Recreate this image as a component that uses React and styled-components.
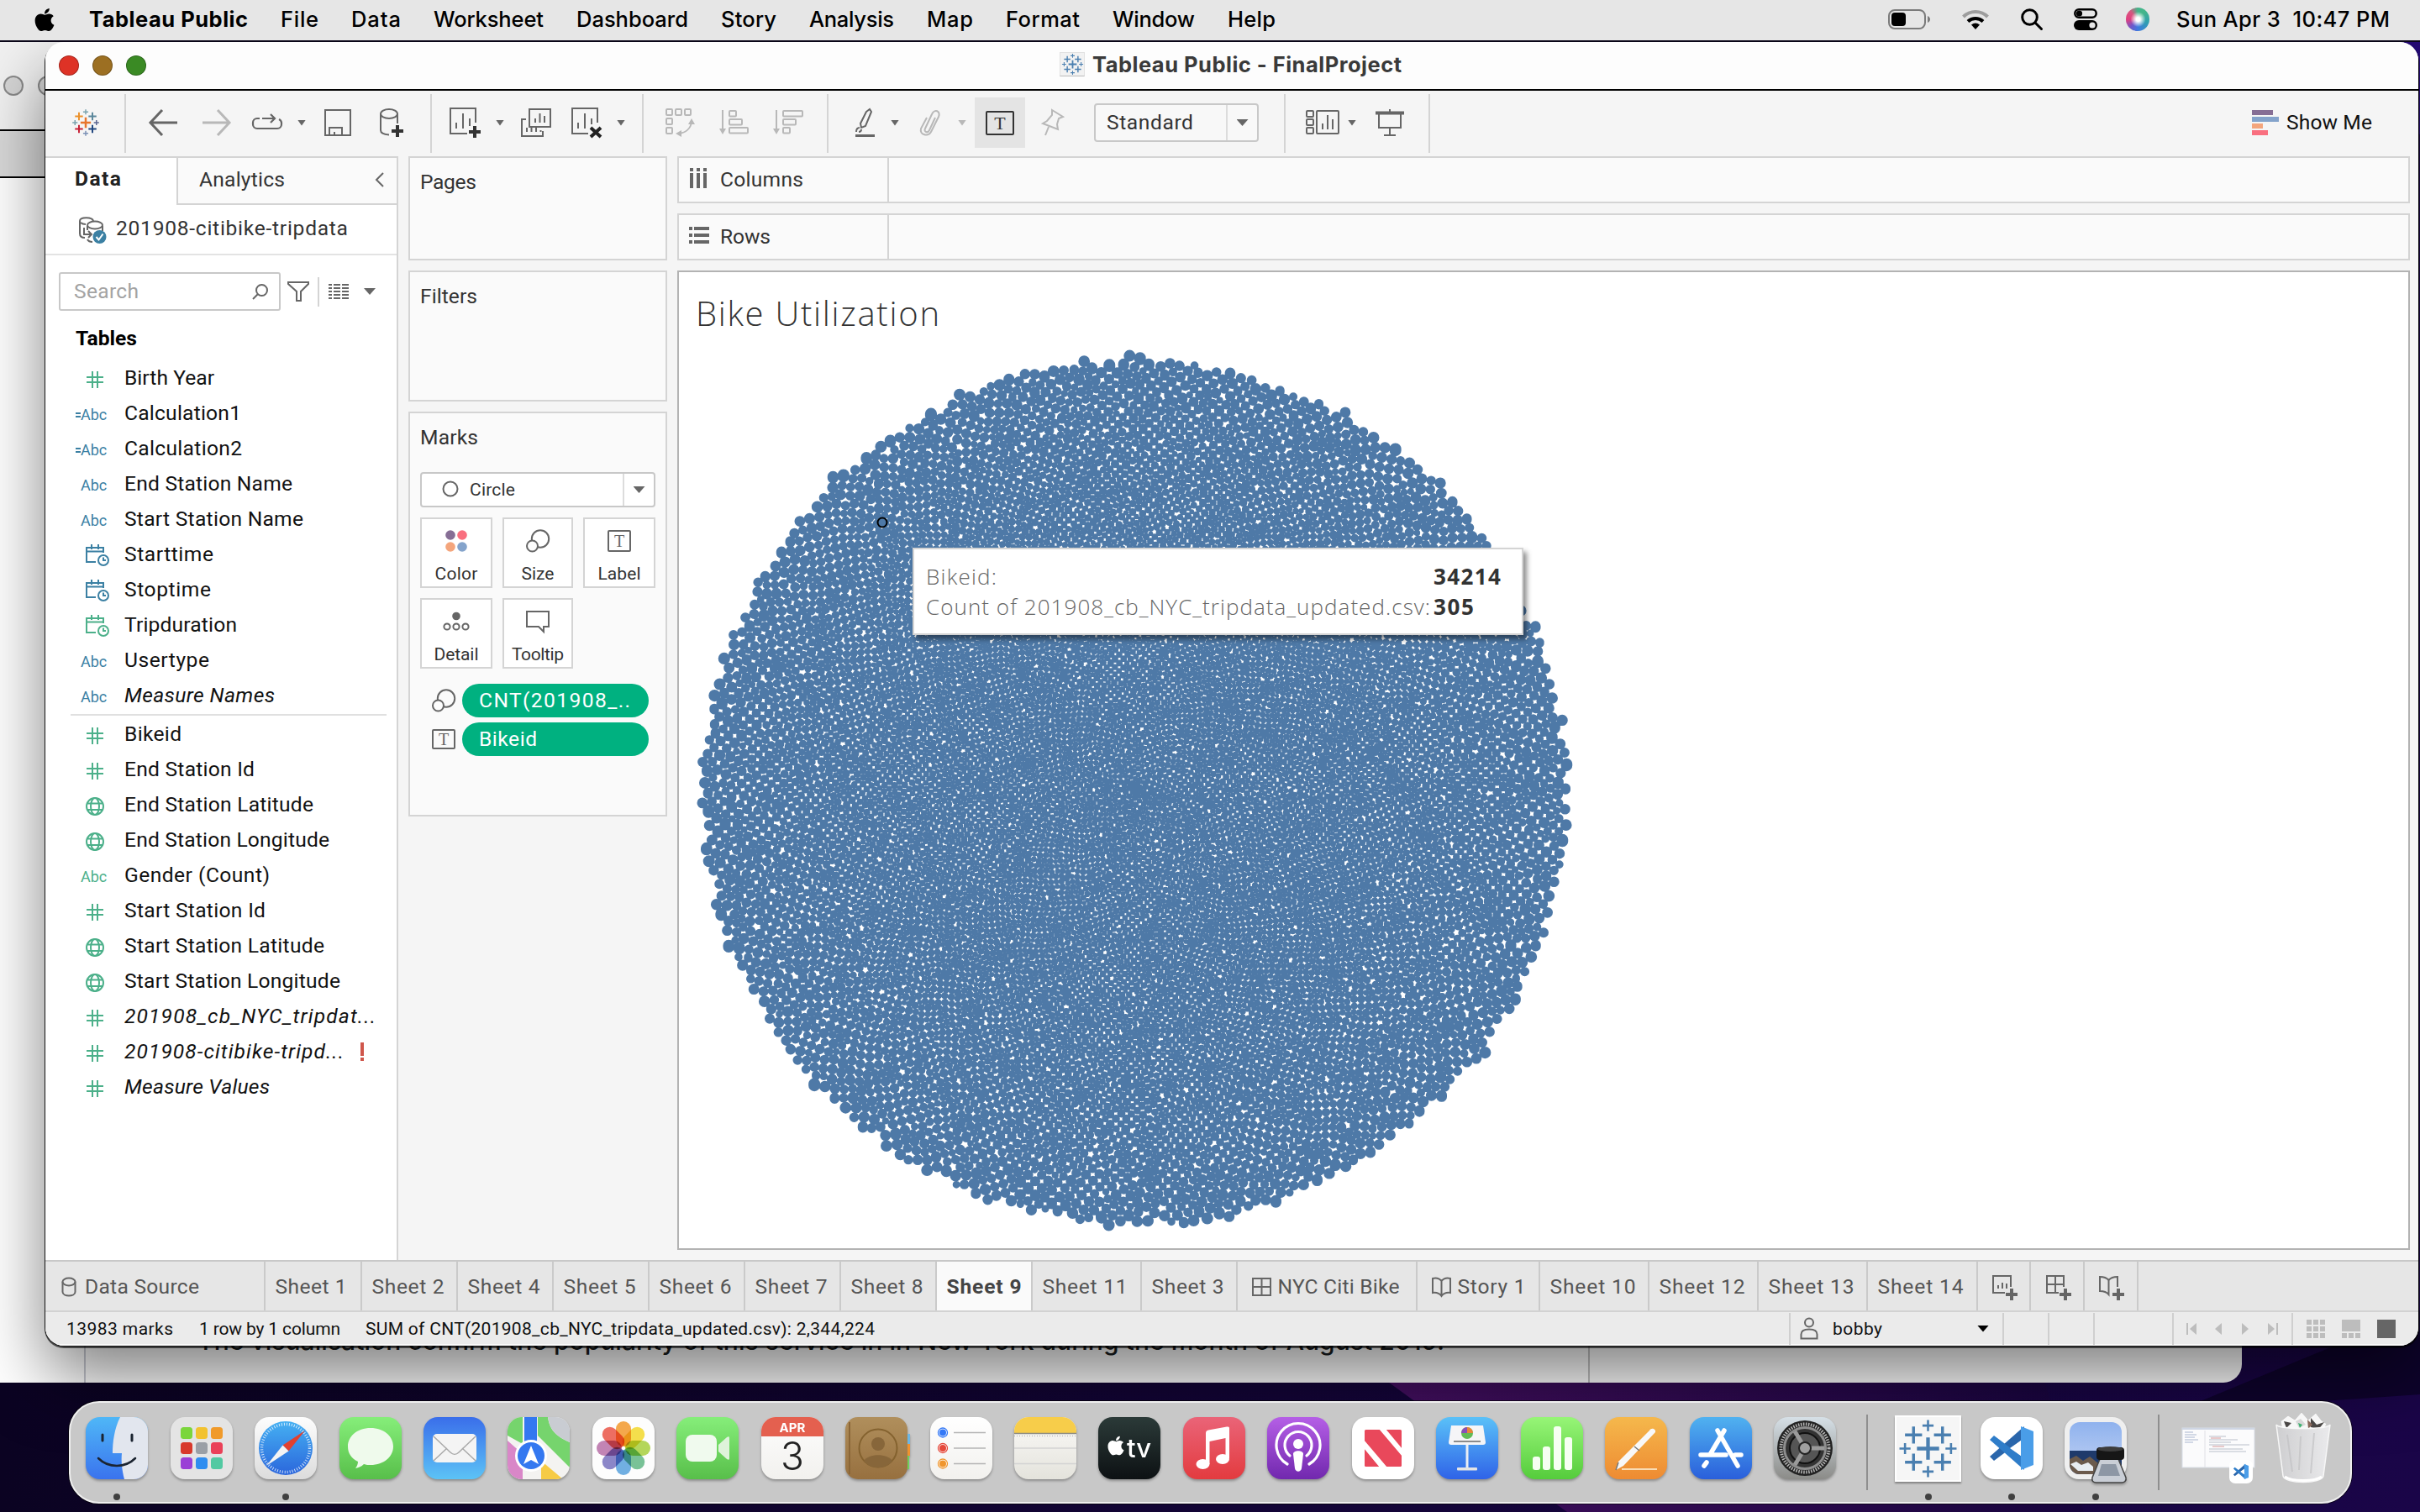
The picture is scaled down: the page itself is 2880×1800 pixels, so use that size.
import React, { useLayoutEffect, useMemo, useRef, useState } from "react";
import styled, { createGlobalStyle, css } from "styled-components";
import { FaApple } from "react-icons/fa";

const UI = `Roboto, "Open Sans", "Liberation Sans", sans-serif`;
const BOOK = `"Open Sans", "Noto Sans", sans-serif`;
const SYS = `Inter, "Liberation Sans", sans-serif`;

const GlobalStyle = createGlobalStyle`
  * { box-sizing: border-box; }
  html, body { margin: 0; padding: 0; background: #0c0326; overflow: hidden; }
  svg { display: block; flex: none; overflow: visible; }
`;

/* ---------- text ---------- */

const TextSpan = styled.span`
  display: inline-block;
  flex: none;
  white-space: pre;
  font-family: ${(p) => (p.$sys ? SYS : p.$book ? BOOK : UI)};
  font-size: ${(p) => p.$size || 24.6}px;
  font-weight: ${(p) => p.$weight || 400};
  font-style: ${(p) => (p.$italic ? "italic" : "normal")};
  line-height: ${(p) => p.$line || 32}px;
  color: ${(p) => p.$color || "#333"};
  margin-left: ${(p) => p.$ml || 0}px;
`;

/* A label set to a fixed measure: tracking is adjusted so it fills `w`. */
function Text({ w, children, ...rest }) {
  const ref = useRef(null);
  const [track, setTrack] = useState(0);
  useLayoutEffect(() => {
    if (!w) return;
    const el = ref.current;
    const range = document.createRange();
    range.selectNodeContents(el);
    el.style.letterSpacing = "0px";
    const natural = range.getBoundingClientRect().width;
    const t = (w - natural) / Math.max(1, String(children).length - 1);
    el.style.letterSpacing = `${t}px`;
    setTrack(t);
  }, [w, children]);
  return (
    <TextSpan ref={ref} style={w ? { width: w, letterSpacing: track } : undefined} {...rest}>
      {children}
    </TextSpan>
  );
}

/* ---------- desktop ---------- */

const Desktop = styled.div`
  position: relative;
  width: 2880px;
  height: 1800px;
  overflow: hidden;
  background: #0d0428;
`;

const Wallpaper = styled.svg`
  position: absolute;
  inset: 0;
`;

const MenuBar = styled.header`
  position: relative;
  z-index: 5;
  display: flex;
  align-items: center;
  height: 50px;
  padding: 0 36px 2px 40px;
  background: #e6e6e6;
  border-bottom: 2px solid #0a0618;
`;

const MenuItems = styled.nav`
  display: flex;
  gap: 39px;
  margin-left: 40px;
  flex: 1;
`;

const MenuStatus = styled.div`
  display: flex;
  align-items: center;
`;

const BackWindow = styled.section`
  position: absolute;
  left: 0;
  top: 50px;
  width: 2668px;
  height: 1596px;
  overflow: hidden;
  display: flex;
  flex-direction: column;
  background: #fff;
  border-bottom-right-radius: 22px;
`;

const BackTitle = styled.div`
  display: flex;
  align-items: center;
  gap: 17px;
  height: 104px;
  padding-left: 4px;
  background: #f1f1f1;
`;

const GreyLight = styled.i`
  width: 24px;
  height: 24px;
  border-radius: 50%;
  background: #d6d6d6;
  border: 2px solid #8a8a8a;
`;

const BackBand = styled.div`
  height: 58px;
  background: #d9d9d9;
  border-top: 2px solid #000;
  border-bottom: 2px solid #000;
`;

const BackPage = styled.div`
  flex: 1;
  display: flex;
  align-items: flex-end;
`;

const BackGutter = styled.div`
  width: 102px;
  height: 100%;
  border-right: 2px solid #c9cbd3;
`;

const BackArticle = styled.div`
  width: 1790px;
  height: 70px;
  padding-left: 133px;
  border-right: 2px solid #c4c4c4;
`;

const MainWindow = styled.main`
  position: absolute;
  left: 54px;
  top: 50px;
  width: 2824px;
  height: 1552px;
  display: flex;
  flex-direction: column;
  overflow: hidden;
  border-radius: 22px;
  background: #f5f5f5;
`;

const WindowShadow = styled.div`
  position: absolute;
  left: 54px;
  top: 52px;
  width: 2824px;
  height: 1550px;
  border-radius: 22px;
  box-shadow: 0 0 0 1px rgba(0, 0, 0, 0.75), 0 2px 0 1px rgba(0, 0, 0, 0.6), 0 36px 80px rgba(0, 0, 0, 0.5);
`;

const TitleBar = styled.div`
  position: relative;
  display: flex;
  align-items: center;
  height: 58px;
  padding-left: 16px;
  background: #fdfdfd;
  border-bottom: 2px solid #000;
`;

const Light = styled.i`
  width: 24px;
  height: 24px;
  margin-right: 16px;
  border-radius: 50%;
  background: ${(p) => p.$c};
  border: 1px solid rgba(0, 0, 0, 0.25);
`;

const WindowTitle = styled.div`
  display: flex;
  align-items: center;
  gap: 9px;
  margin-left: 1071px;
  padding-bottom: 2px;
`;

const DocIcon = styled.span`
  display: flex;
  padding: 0 1px;
  width: 30px;
  height: 29px;
  align-items: center;
  justify-content: center;
  background: #f2f2f2;
  border: 1px solid #e2e2e2;
  border-bottom-color: #bbb;
  margin-top: -2px;
`;

/* ---------- toolbar ---------- */

const Toolbar = styled.div`
  display: flex;
  align-items: center;
  height: 78px;
  flex: none;
  padding: 0 53px 2px 0;
`;

const Slot = styled.span`
  display: flex;
  align-items: center;
  justify-content: center;
  flex: none;
  width: ${(p) => p.$w}px;
  height: ${(p) => p.$h || 34}px;
  margin-left: ${(p) => p.$ml}px;
  background: ${(p) => p.$bg || "transparent"};
`;

const Sep = styled.i`
  flex: none;
  width: 2px;
  height: 70px;
  margin-left: ${(p) => p.$ml}px;
  margin-top: 2px;
  background: #d4d4d4;
`;

const Caret = styled.i`
  flex: none;
  width: ${(p) => p.$w || 10}px;
  height: ${(p) => p.$h || 7}px;
  margin-left: ${(p) => p.$ml || 0}px;
  background: ${(p) => p.$c || "#666"};
  clip-path: polygon(0 0, 100% 0, 50% 100%);
`;

const Select = styled.div`
  display: flex;
  flex: none;
  width: ${(p) => p.$w}px;
  height: ${(p) => p.$h}px;
  margin-left: ${(p) => p.$ml || 0}px;
  margin-top: ${(p) => p.$mt || 0}px;
  border: 2px solid #c8c8c8;
  border-radius: 4px;
  background: ${(p) => p.$bg || "#f8f8f8"};
`;

const SelectValue = styled.div`
  display: flex;
  align-items: center;
  flex: 1;
  padding-left: ${(p) => p.$pl}px;
`;

const SelectArrow = styled.div`
  display: flex;
  align-items: center;
  justify-content: center;
  width: 37px;
  border-left: 2px solid #dcdcdc;
`;

/* ---------- body ---------- */

const Body = styled.div`
  display: flex;
  gap: 12px;
  height: 1314px;
  padding-right: 10px;
  flex: none;
`;

const DataPane = styled.aside`
  display: flex;
  flex-direction: column;
  width: 420px;
  background: #fff;
  border-top: 2px solid #d4d4d4;
  border-right: 2px solid #d4d4d4;
`;

const PaneTabs = styled.div`
  display: flex;
  height: 56px;
`;

const PaneTab = styled.div`
  display: flex;
  align-items: center;
  ${(p) =>
    p.$active
      ? css`
          width: 156px;
          padding-left: 35px;
          padding-bottom: 6px;
        `
      : css`
          flex: 1;
          padding: 0 15px 3px 25px;
          justify-content: space-between;
          background: #fafafa;
          border-left: 2px solid #d4d4d4;
          border-bottom: 2px solid #d4d4d4;
        `}
`;

const SourceRow = styled.div`
  display: flex;
  align-items: center;
  gap: 11px;
  height: 60px;
  padding: 0 0 3px 40px;
  border-bottom: 2px solid #e3e3e3;
`;

const SearchRow = styled.div`
  display: flex;
  align-items: center;
  padding: 20px 0 0 16px;
`;

const SearchBox = styled.div`
  display: flex;
  align-items: center;
  justify-content: space-between;
  width: 264px;
  height: 46px;
  padding: 0 13px 0 16px;
  border: 2px solid #c8c8c8;
  border-radius: 3px;
`;

const TablesHead = styled.div`
  height: 42px;
  margin: 12px 0 5px;
  padding: 5px 0 0 36px;
`;

const FieldRow = styled.div`
  display: flex;
  align-items: center;
  height: 42px;
  padding-left: 34px;
`;

const FieldIcon = styled.span`
  display: flex;
  justify-content: flex-end;
  align-items: center;
  width: 40px;
  height: 34px;
  margin-right: 20px;
  padding-top: 3px;
`;

const Bang = styled.i`
  width: 4px;
  height: 22px;
  margin-left: 20px;
  background: linear-gradient(#cf564b 16px, transparent 16px 18px, #cf564b 18px);
`;

const Divider = styled.hr`
  width: 376px;
  height: 2px;
  margin: 1px 0 1px 30px;
  border: 0;
  background: #e0e0e0;
`;

const CardColumn = styled.div`
  display: flex;
  flex-direction: column;
  gap: 12px;
  width: 308px;
  flex: none;
`;

const Card = styled.section`
  height: ${(p) => p.$h}px;
  padding: 13px 12px;
  border: 2px solid #d4d4d4;
  background: #fafafa;
`;

const MarkGrid = styled.div`
  display: grid;
  grid-template-columns: 86px 84px 86px;
  grid-auto-rows: 84px;
  gap: 12px;
  margin: 12px 0 18px;
`;

const MarkButton = styled.div`
  display: flex;
  flex-direction: column;
  align-items: center;
  border: 2px solid #d4d4d4;
  background: #fff;
`;

const MarkIcon = styled.span`
  display: flex;
  align-items: center;
  justify-content: center;
  height: 52px;
`;

const PillRow = styled.div`
  display: flex;
  align-items: center;
  gap: 8px;
  height: 40px;
  margin: 0 0 6px 14px;
`;

const Pill = styled.div`
  display: flex;
  align-items: center;
  width: 222px;
  height: 40px;
  padding-left: 20px;
  padding-bottom: 1px;
  border-radius: 20px;
  background: #00b180;
`;

const ViewColumn = styled.div`
  display: flex;
  flex-direction: column;
  gap: 12px;
  flex: 1;
`;

const Shelf = styled.div`
  display: flex;
  height: 56px;
  border: 2px solid #d4d4d4;
  background: #fafafa;
`;

const ShelfHead = styled.div`
  display: flex;
  align-items: center;
  gap: ${(p) => p.$gap}px;
  width: 250px;
  padding-left: ${(p) => p.$pl}px;
  border-right: 2px solid #d4d4d4;

  svg {
    margin-bottom: 4px;
  }
`;

const Sheet = styled.section`
  position: relative;
  height: 1166px;
  border: 2px solid #b3b3b3;
  background: #fff;
`;

const SheetTitle = styled.h1`
  margin: 0;
  padding: 24px 0 0 20px;
  height: 96px;
`;

const Plot = styled.svg`
  width: 1080px;
  height: 1060px;
`;

const HoverCard = styled.div`
  position: absolute;
  left: 278px;
  top: 328px;
  width: 727px;
  height: 104px;
  display: grid;
  grid-template-columns: 604px auto;
  grid-auto-rows: 36px;
  align-content: start;
  padding: 14px 0 0 14px;
  border: 2px solid #d4d4d4;
  background: #fff;
  box-shadow: 4px 5px 6px rgba(0, 0, 0, 0.45);
`;

/* ---------- bottom bars ---------- */

const TabBar = styled.div`
  display: flex;
  height: 62px;
  flex: none;
  border-top: 2px solid #c8c8c8;
  border-bottom: 2px solid #d2d2d2;
  background: #e6e6e6;
`;

const SheetTab = styled.div`
  display: flex;
  align-items: center;
  gap: 7px;
  flex: none;
  width: ${(p) => p.$w}px;
  padding-left: ${(p) => p.$pl ?? 11.5}px;
  padding-top: 1px;
  background: ${(p) => (p.$active ? "#fafafa" : "transparent")};
  border-right: 2px solid #cacaca;
`;

const StatusBar = styled.div`
  display: flex;
  align-items: center;
  height: 40px;
  padding: 1px 0 0 25px;
  background: #ebebeb;
  border-bottom: 2px solid #fafafa;
`;

const StatusCell = styled.div`
  display: flex;
  align-items: center;
  flex: none;
  height: 38px;
  width: ${(p) => p.$w}px;
  padding-left: ${(p) => p.$pl || 0}px;
  margin-left: ${(p) => p.$ml || 0};
  border-left: 2px solid #cfcfcf;
`;

/* ---------- dock ---------- */

const Dock = styled.footer`
  position: absolute;
  left: 82px;
  top: 1668px;
  width: 2717px;
  height: 122px;
  display: flex;
  padding: 0 0 0 5px;
  border: 2px solid #efefef;
  border-radius: 36px;
  background: #c8c8c8;
  box-shadow: 0 0 0 1px rgba(0, 0, 0, 0.6);
`;

const DockSlot = styled.div`
  display: flex;
  flex-direction: column;
  align-items: center;
  flex: none;
  width: ${(p) => p.$w || 100.45}px;
  padding-top: ${(p) => p.$pt ?? 17}px;
`;

const DockIcon = styled.svg`
  width: 74px;
  height: 74px;
  filter: drop-shadow(0 2px 1.5px rgba(0, 0, 0, 0.3));
`;

const DockDot = styled.i`
  width: 8px;
  height: 8px;
  margin-top: 17px;
  border-radius: 50%;
  background: #404040;
`;

const DockSep = styled.i`
  width: 2px;
  height: 90px;
  background: #8f8f8f;
`;

/* ---------- small drawings ---------- */

const I = ({ w, h, c = "#666", sw = 2, children, dy = 0 }) => (
  <svg width={w} height={h} viewBox={`0 ${-dy} ${w} ${h}`} fill="none" stroke={c} strokeWidth={sw}>
    {children}
  </svg>
);

const plus = (x, y, s, w, c) => <path key={`${x},${y}`} d={`M${x - s} ${y}h${2 * s}M${x} ${y - s}v${2 * s}`} stroke={c} strokeWidth={w} />;

function TableauMark({ size, colors, k = 1 }) {
  const c = colors;
  return (
    <svg width={size} height={size} viewBox="-36 -36 72 72" fill="none">
      {plus(0, 0, 13, 5 * k, c[0])}
      {plus(-17, -16, 10, 4 * k, c[1])}
      {plus(17, -16, 10, 4 * k, c[2])}
      {plus(-17, 16, 10, 4 * k, c[3])}
      {plus(17, 16, 10, 4 * k, c[4])}
      {plus(0, -27, 6.5, 3 * k, c[5])}
      {plus(0, 27, 6.5, 3 * k, c[6])}
      {plus(-27, 0, 6.5, 3 * k, c[7])}
      {plus(27, 0, 6.5, 3 * k, c[8])}
    </svg>
  );
}
const LOGO = ["#e8762c", "#eb912c", "#5b879b", "#c72035", "#1f457e", "#7aa3ae", "#7b90b5", "#7aa3ae", "#5b6591"];
const BLUE = Array(9).fill("#4a7fb0");

function NewSheet() {
  return (
    <I w={38} h={36}>
      <path d="M31 18V1H1v30h20M8 25v-7M16 25V7M24 22V13" />
      <path d="M23 29h14M30 22v14" stroke="#333" strokeWidth="4" />
    </I>
  );
}
function ClearSheet() {
  return (
    <I w={36} h={36}>
      <path d="M31 18V1H1v30h19M8 25v-7M16 25V7M24 20V13" />
      <path d="M23 24l12 11M35 24L23 35" stroke="#222" strokeWidth="4" />
    </I>
  );
}
function TagT({ w = 28, h = 24, c = "#666", fs = 20 }) {
  return (
    <I w={w} h={h} c={c}>
      <rect x="1" y="1" width={w - 2} height={h - 2} rx="1" />
      <text x={w / 2} y={h / 2 + fs * 0.34} textAnchor="middle" fontFamily="Liberation Serif, serif" fontSize={fs} fill={c} stroke="none">
        T
      </text>
    </I>
  );
}
function SizeGlyph() {
  return (
    <I w={28} h={28}>
      <circle cx="17" cy="11.5" r="10.2" />
      <circle cx="7.5" cy="20" r="6.5" fill="#fdfdfd" />
    </I>
  );
}
const sortBars = (lens) => (
  <>
    <path d="M4 2v24" />
    <path d="M0 24h8l-4 7z" fill="#b8b8b8" stroke="none" />
    {lens.map((l, i) => (
      <rect key={i} x="12" y={3 + i * 10} width={l} height="6.5" rx="1" />
    ))}
  </>
);

function HashIcon() {
  return (
    <I w={26} h={24} c="#4cb08a">
      <path d="M1 9h20M1 15h20M8 2v20M14 2v20" />
    </I>
  );
}
function GlobeIcon() {
  return (
    <I w={26} h={24} c="#4cb08a">
      <circle cx="11" cy="12" r="10" />
      <ellipse cx="11" cy="12" rx="5" ry="10" />
      <path d="M1 8.500h20M1 16h20" />
    </I>
  );
}
function CalendarIcon({ c }) {
  return (
    <svg width={26} height={27} viewBox="0 0 26 27" fill="none" stroke={c} strokeWidth="2">
      <path d="M21 10V4H1v17h11M1 8.500h20M7 0v6M15 0v6" />
      <circle cx="21" cy="19" r="6" />
      <path d="M21 15.500v3.500h3" />
    </svg>
  );
}
const TypeText = styled.span`
  font-family: ${UI};
  font-size: 18px;
  line-height: 20px;
  letter-spacing: -0.1px;
  color: ${(p) => p.$c};
  margin-right: 1px;
  white-space: pre;
`;

const TYPE_ICONS = {
  num: <HashIcon />,
  geo: <GlobeIcon />,
  abc: <TypeText $c="#3b80a3">Abc</TypeText>,
  gabc: <TypeText $c="#4cb08a">Abc</TypeText>,
  calc: (
    <>
      <I w={6} h={20} c="#3b80a3">
        <path d="M0 8h6M0 12h6" />
      </I>
      <TypeText $c="#3b80a3">Abc</TypeText>
    </>
  ),
  time: <CalendarIcon c="#3b80a3" />,
  gtime: <CalendarIcon c="#4cb08a" />,
};

const DIMENSIONS = [
  ["num", "Birth Year", 104],
  ["calc", "Calculation1", 136],
  ["calc", "Calculation2", 137],
  ["abc", "End Station Name", 197],
  ["abc", "Start Station Name", 210],
  ["time", "Starttime", 103],
  ["time", "Stoptime", 100],
  ["gtime", "Tripduration", 131],
  ["abc", "Usertype", 98],
  ["abc", "Measure Names", 176, true],
];
const MEASURES = [
  ["num", "Bikeid", 65],
  ["num", "End Station Id", 152],
  ["geo", "End Station Latitude", 222],
  ["geo", "End Station Longitude", 241],
  ["gabc", "Gender (Count)", 170],
  ["num", "Start Station Id", 165],
  ["geo", "Start Station Latitude", 235],
  ["geo", "Start Station Longitude", 254],
  ["num", "201908_cb_NYC_tripdat...", 296, true],
  ["num", "201908-citibike-tripd...", 258, true, true],
  ["num", "Measure Values", 170, true],
];

function Field({ data: [type, name, w, italic, bang] }) {
  return (
    <FieldRow>
      <FieldIcon>{TYPE_ICONS[type]}</FieldIcon>
      <Text w={w + 3} $italic={italic} $color="#111">
        {name}
      </Text>
      {bang && <Bang />}
    </FieldRow>
  );
}

/* ---------- packed bubbles ---------- */

function place(b, a, c) {
  const dx = b.x - a.x;
  const dy = b.y - a.y;
  const d2 = dx * dx + dy * dy;
  const a2 = (a.r + c.r) ** 2;
  const b2 = (b.r + c.r) ** 2;
  if (a2 > b2) {
    const x = (d2 + b2 - a2) / (2 * d2);
    const y = Math.sqrt(Math.max(0, b2 / d2 - x * x));
    c.x = b.x - x * dx - y * dy;
    c.y = b.y - x * dy + y * dx;
  } else {
    const x = (d2 + a2 - b2) / (2 * d2);
    const y = Math.sqrt(Math.max(0, a2 / d2 - x * x));
    c.x = a.x + x * dx - y * dy;
    c.y = a.y + x * dy + y * dx;
  }
}
function hits(a, b) {
  const dr = a.r + b.r - 1e-6;
  const dx = b.x - a.x;
  const dy = b.y - a.y;
  return dr > 0 && dr * dr > dx * dx + dy * dy;
}
function score(a) {
  const b = a.next;
  const ab = a.r + b.r;
  const dx = (a.x * b.r + b.x * a.r) / ab;
  const dy = (a.y * b.r + b.y * a.r) / ab;
  return dx * dx + dy * dy;
}

function packBubbles(count, radius) {
  let seed = 20190801;
  const rnd = () => {
    seed = (seed * 1664525 + 1013904223) % 4294967296;
    return seed / 4294967296;
  };
  const nodes = [];
  for (let i = 0; i < count; i++) {
    const t = i / count;
    const base = 3.15 + 2.5 * Math.pow(t, 3);
    const v = rnd();
    const small = rnd() < 0.14 ? 0.78 : 1;
    nodes.push({ x: 0, y: 0, r: base * (0.86 + 0.24 * v) * small });
  }
  let [a, b, c] = nodes;
  a.x = -b.r;
  b.x = a.r;
  place(b, a, c);
  a.next = c.prev = b;
  b.next = a.prev = c;
  c.next = b.prev = a;
  pack: for (let i = 3; i < count; i++) {
    c = nodes[i];
    place(a, b, c);
    let j = b.next;
    let k = a.prev;
    let sj = b.r;
    let sk = a.r;
    do {
      if (sj <= sk) {
        if (hits(j, c)) {
          b = j;
          a.next = b;
          b.prev = a;
          --i;
          continue pack;
        }
        sj += j.r;
        j = j.next;
      } else {
        if (hits(k, c)) {
          a = k;
          a.next = b;
          b.prev = a;
          --i;
          continue pack;
        }
        sk += k.r;
        k = k.prev;
      }
    } while (j !== k.next);
    c.prev = a;
    c.next = b;
    a.next = b.prev = b = c;
    let aa = score(a);
    while ((c = c.next) !== b) {
      const ca = score(c);
      if (ca < aa) {
        a = c;
        aa = ca;
      }
    }
    b = a.next;
  }
  let max = 0;
  for (const n of nodes) max = Math.max(max, Math.hypot(n.x, n.y) + n.r);
  const s = radius / max;
  return nodes.map((n) => ({ x: n.x * s, y: n.y * s, r: n.r * s * 1.07 }));
}

function Bubbles() {
  const d = useMemo(() => {
    const f = (v) => v.toFixed(1);
    return packBubbles(13983, 526)
      .map(({ x, y, r }) => `M${f(543 + x - r)} ${f(523 + y)}a${f(r)} ${f(r)} 0 1 0 ${f(2 * r)} 0a${f(r)} ${f(r)} 0 1 0 ${f(-2 * r)} 0`)
      .join("");
  }, []);
  return (
    <Plot viewBox="0 0 1080 1060">
      <path d={d} fill="#4e79a7" />
      <circle cx="242" cy="202" r="5.500" fill="#4e79a7" stroke="#000" strokeWidth="2" />
    </Plot>
  );
}

/* ---------- toolbar content ---------- */

function Tools() {
  const dim = "#b8b8b8";
  return (
    <Toolbar>
      <Slot $w={34} $ml={31}>
        <TableauMark size={34} colors={LOGO} k={1.05} />
      </Slot>
      <Sep $ml={29} />
      <Slot $w={34} $ml={27}>
        <I w={34} h={32} sw={3}>
          <path d="M1 16h33M16 1L2 16l14 15" />
        </I>
      </Slot>
      <Slot $w={34} $ml={30}>
        <I w={34} h={32} sw={3} c={dim}>
          <path d="M0 16h32M18 1l14 15-14 15" />
        </I>
      </Slot>
      <Slot $w={36} $ml={25}>
        <I w={36} h={22} sw={2.2}>
          <path d="M9 6H6a5 5 0 0 0-5 5v2a5 5 0 0 0 5 5h24a5 5 0 0 0 5-5v-2a5 5 0 0 0-3-4M12 6h14M22 1l5 5-5 5" />
        </I>
      </Slot>
      <Caret $ml={18} />
      <Slot $w={32} $ml={22}>
        <I w={32} h={32}>
          <path d="M1 1h30v30H1zM6 31v-9h15v9M12 31v-4" />
        </I>
      </Slot>
      <Slot $w={28} $ml={34}>
        <I w={28} h={34}>
          <ellipse cx="11" cy="6.500" rx="10" ry="5.500" />
          <path d="M1 7v19c0 3 4 5 10 5.500M21 7v11" />
          <path d="M14 27h14M21 20v14" stroke="#333" strokeWidth="4" />
        </I>
      </Slot>
      <Sep $ml={32} />
      <Slot $w={38} $ml={21}>
        <NewSheet />
      </Slot>
      <Caret $ml={17} />
      <Slot $w={36} $ml={20}>
        <I w={36} h={34}>
          <path d="M10 1h25v21H10zM17 17v-5M22.500 17V6M28 17V9M6 13H1v20h25v-6M7 28v-5M12.500 28v-5M18 28v-5M23.500 28v-2" />
        </I>
      </Slot>
      <Slot $w={36} $ml={24}>
        <ClearSheet />
      </Slot>
      <Caret $ml={18} />
      <Sep $ml={20} />
      <Slot $w={36} $ml={26}>
        <I w={36} h={34} c={dim}>
          <rect x="1" y="1" width="7" height="7" rx="1" />
          <rect x="12" y="1" width="7" height="7" rx="1" />
          <rect x="23" y="1" width="7" height="7" rx="1" />
          <rect x="1" y="12" width="7" height="7" rx="1" />
          <rect x="1" y="23" width="7" height="7" rx="1" />
          <path d="M16 30c8-1 14-6 15-14" />
          <path d="M12 30l7-4v8zM31 12l-4 7h8z" fill={dim} stroke="none" />
        </I>
      </Slot>
      <Slot $w={36} $ml={28}>
        <I w={36} h={34} c={dim}>
          {sortBars([8, 15, 22])}
        </I>
      </Slot>
      <Slot $w={36} $ml={28}>
        <I w={36} h={34} c={dim}>
          {sortBars([23, 15, 8])}
        </I>
      </Slot>
      <Sep $ml={28} />
      <Slot $w={24} $ml={32}>
        <I w={24} h={34}>
          <path d="M13 4l4-3 2 3-7 17-5 2-1-5zM1 28c0-3 1-5 4-5M4 28c2 0 3-1 3-3" />
          <path d="M0 32.500h23" strokeWidth="3" />
        </I>
      </Slot>
      <Caret $ml={18} />
      <Slot $w={26} $ml={24}>
        <I w={26} h={32} c={dim}>
          <path d="M19 10l-7 15c-2 4-7 2-5-2l8-17c3-7 11-4 8 3l-9 18c-3 6-14 4-12-4L9 10" />
        </I>
      </Slot>
      <Caret $ml={20} $c={dim} />
      <Slot $w={60} $h={60} $ml={10} $bg="#e4e4e4">
        <TagT w={34} h={29} c="#333" fs={22} />
      </Slot>
      <Slot $w={26} $ml={20}>
        <I w={26} h={32} c={dim}>
          <path d="M12 1l13 8-5 2-2 7 1 6L1 17l5-3 6-7zM8 21L4 31" />
        </I>
      </Slot>
      <Select $w={196} $h={46} $ml={36}>
        <SelectValue $pl={13}>
          <Text w={103}>Standard</Text>
        </SelectValue>
        <SelectArrow>
          <Caret $w={14} $h={8} />
        </SelectArrow>
      </Select>
      <Sep $ml={30} />
      <Slot $w={40} $ml={24}>
        <I w={40} h={30}>
          <rect x="1" y="1" width="8" height="7" rx="1" />
          <rect x="1" y="11" width="8" height="7" rx="1" />
          <rect x="1" y="21" width="8" height="7" rx="1" />
          <rect x="13" y="1" width="26" height="27" rx="1" />
          <path d="M20 23v-7M26 23V6M32 23V11" />
        </I>
      </Slot>
      <Caret $ml={10} />
      <Slot $w={34} $ml={23}>
        <I w={34} h={32}>
          <path d="M4 4v18h26V4M17 22v9M10 31h14M17 0v4" />
          <path d="M0 4.500h34" strokeWidth="4" />
        </I>
      </Slot>
      <Sep $ml={29} />
      <Slot $w={32} $ml={978}>
        <svg width="32" height="30">
          <path d="M0 0h25v6H0z" fill="#866e95" />
          <path d="M0 8h32v6H0z" fill="#84a3cb" />
          <path d="M0 16h13v6H0z" fill="#f4a57c" />
          <path d="M0 24h19v6H0z" fill="#f96f7f" />
        </svg>
      </Slot>
      <Text w={102} $ml={9} $color="#111">
        Show Me
      </Text>
    </Toolbar>
  );
}

/* ---------- bottom tabs ---------- */

const BookGlyph = () => (
  <I w={23} h={24} c="#666">
    <path d="M1 2c4-1 8 0 10.500 3C14 2 18 1 22 2v17c-4-.500-8 .500-10.500 4C9 19.500 5 18.500 1 19zM11.500 5v17" />
  </I>
);
const GridGlyph = () => (
  <I w={23} h={22}>
    <path d="M1 1h21v20H1zM11.500 1v20M1 11h21" />
  </I>
);

const TABS = [
  [115, "Sheet 1", 83],
  [114, "Sheet 2", 84],
  [114, "Sheet 4", 84],
  [114, "Sheet 5", 84],
  [114, "Sheet 6", 84],
  [114, "Sheet 7", 84],
  [114, "Sheet 8", 84],
  [114, "Sheet 9", 87, "active"],
  [130, "Sheet 11", 99],
  [114, "Sheet 3", 84],
  [214, "NYC Citi Bike", 143, "grid"],
  [146, "Story 1", 79, "book"],
  [130, "Sheet 10", 100],
  [130, "Sheet 12", 100],
  [130, "Sheet 13", 100],
  [131, "Sheet 14", 100],
];

function BottomTabs() {
  return (
    <TabBar>
      <SheetTab $w={262} $pl={19}>
        <I w={18} h={24}>
          <ellipse cx="9" cy="6" rx="7.500" ry="4.500" />
          <path d="M1.500 6v12c0 6 15 6 15 0V6" />
        </I>
        <Text w={136} $color="#555" $ml={3}>
          Data Source
        </Text>
      </SheetTab>
      {TABS.map(([w, name, tw, kind]) => (
        <SheetTab key={name} $w={w} $active={kind === "active"} $pl={kind === "grid" || kind === "book" ? 16.5 : undefined}>
          {kind === "grid" && <GridGlyph />}
          {kind === "book" && <BookGlyph />}
          <Text w={tw + 2} $ml={kind === "grid" || kind === "book" ? 1 : 0} $color={kind === "active" ? "#444" : "#555"} $weight={kind === "active" ? 700 : 400}>
            {name}
          </Text>
        </SheetTab>
      ))}
      <SheetTab $w={63} $pl={17}>
        <I w={30} h={28}>
          <path d="M22 14V1H1v20h14M7 16v-4M12 16V9M17 16v-6" />
          <path d="M16 23h14M23 16v14" strokeWidth="4" />
        </I>
      </SheetTab>
      <SheetTab $w={64} $pl={18}>
        <I w={30} h={28}>
          <path d="M21 14V1H1v20h14M11 1v20M1 11h20" />
          <path d="M16 23h14M23 16v14" strokeWidth="4" />
        </I>
      </SheetTab>
      <SheetTab $w={64} $pl={17}>
        <I w={30} h={28}>
          <path d="M22 14V2c-5 0-8 1-10.500 4C9 3 6 2 1 2v17c5 0 8 1 10.500 4V6" />
          <path d="M16 23h14M23 16v14" strokeWidth="4" />
        </I>
      </SheetTab>
    </TabBar>
  );
}

function Status() {
  const g = "#bdbdbd";
  return (
    <StatusBar>
      <Text w={127} $size={21} $color="#111">13983 marks</Text>
      <Text w={168} $size={21} $color="#111" $ml={31}>1 row by 1 column</Text>
      <Text w={606} $size={21} $color="#111" $ml={30}>SUM of CNT(201908_cb_NYC_tripdata_updated.csv): 2,344,224</Text>
      <StatusCell $w={254} $pl={11} $ml="auto">
        <I w={22} h={27}>
          <circle cx="11" cy="6.500" r="5" />
          <path d="M1.500 25.500v-5c0-4 3-6 9.500-6s9.500 2 9.500 6v5z" />
        </I>
        <Text w={59} $size={21} $color="#111" $ml={17}>bobby</Text>
        <Caret $c="#000" $w={14} $h={8} $ml={113} />
      </StatusCell>
      <StatusCell $w={54} />
      <StatusCell $w={54} />
      <StatusCell $w={94} />
      <StatusCell $w={142} $pl={15}>
        <svg width="110" height="14">
          <path d="M0 0h2v14H0zM12 0v14L4 7zM42 0v14l-8-7zM66 0v14l8-7zM97 0v14l8-7zM107 0h2v14h-2z" fill={g} />
        </svg>
      </StatusCell>
      <StatusCell $w={151} $pl={16}>
        <svg width="108" height="22">
          {[0, 1, 2].map((r) => [0, 1, 2].map((c) => <rect key={`${r}${c}`} x={c * 8} y={r * 8} width="6" height="6" fill={g} />))}
          <rect x="42" width="22" height="14" fill={g} />
          {[0, 1, 2].map((c) => (
            <rect key={c} x={42 + c * 8} y="16" width="6" height="6" fill={g} />
          ))}
          <rect x="84" width="22" height="22" fill="#666" />
        </svg>
      </StatusCell>
    </StatusBar>
  );
}

/* ---------- dock icons ---------- */

const Grad = ({ id, a, b, h }) => (
  <linearGradient id={id} x1="0" y1="0" x2={h ? 1 : 0} y2={h ? 0 : 1}>
    <stop offset="0" stopColor={a} />
    <stop offset="1" stopColor={b} />
  </linearGradient>
);

function AppIcon({ id, a, b = a, children }) {
  return (
    <DockIcon viewBox="0 0 74 74">
      <defs>
        <Grad id={id} a={a} b={b} />
        <clipPath id={`${id}c`}>
          <rect width="74" height="74" rx="17" />
        </clipPath>
      </defs>
      <rect width="74" height="74" rx="17" fill={`url(#${id})`} />
      <g clipPath={`url(#${id}c)`}>{children}</g>
    </DockIcon>
  );
}

const VSMark = () => (
  <>
    <path d="M11 47l5 5 36-27V11z" fill="#2a66ab" />
    <path d="M11 27l5-5 36 27v14z" fill="#2f7dc9" />
    <path d="M48 11l15 6v40l-15 6z" fill="#4a9de8" />
    <path d="M48 28v18L35 37z" fill="#fff" />
  </>
);

const PETALS = ["#f29a2e", "#f2d92e", "#a8cf3f", "#63b886", "#5aa2dd", "#7872bf", "#b870a8", "#ea5648"];
const LAUNCH = ["#7bd63c", "#f2c230", "#f09a2a", "#d8392b", "#9a9fa6", "#ea4158", "#9a3fd6", "#2f8df0", "#52c9a2"];

function DockIcons() {
  const icons = [
    <AppIcon id="finder" a="#4fb7f7" b="#3a73ee">
      <path d="M41 0C34 14 32 30 32 43h11c-1 9 0 20 3 31h28V0z" fill="#e2e6ee" />
      <path d="M20 21v7M55 21v7" stroke="#1b2430" strokeWidth="3" strokeLinecap="round" />
      <path d="M15 49c12 12 32 12 44 0" stroke="#1b2430" strokeWidth="2.500" fill="none" strokeLinecap="round" />
    </AppIcon>,
    <AppIcon id="launch" a="#e4e4e4">
      {LAUNCH.map((c, i) => (
        <rect key={c} x={12 + (i % 3) * 18} y={12 + Math.floor(i / 3) * 18} width="14" height="14" rx="3.500" fill={c} />
      ))}
    </AppIcon>,
    <AppIcon id="safari" a="#fdfdfd" b="#dcdcdc">
      <defs>
        <Grad id="saf2" a="#45b0f2" b="#2b66dc" />
      </defs>
      <circle cx="37" cy="37" r="32" fill="url(#saf2)" />
      <circle cx="37" cy="37" r="28.500" fill="none" stroke="#fff" strokeWidth="3.500" strokeDasharray="1 2" opacity=".75" />
      <path d="M60 16L40.500 40.500l-7-7z" fill="#e2402f" />
      <path d="M14 58l19.500-24.500 7 7z" fill="#f4f4f4" />
    </AppIcon>,
    <AppIcon id="messages" a="#86ee7a" b="#58bf4a">
      <path d="M37 13c16 0 27 10 27 22S53 57 37 57c-3 0-5 0-8-1-3 3-6 4-10 5 2-3 3-5 3-8-8-4-12-10-12-18 0-12 11-22 27-22z" fill="#effaec" />
    </AppIcon>,
    <AppIcon id="mail" a="#3a6eea" b="#5cc3f6">
      <rect x="11" y="20" width="52" height="34" rx="5" fill="#f4f4f4" />
      <path d="M12 23l20 19c3 3 7 3 10 0l20-19M12 52l16-15M62 52L46 37" fill="none" stroke="#a9a9a9" strokeWidth="1.500" />
    </AppIcon>,
    <AppIcon id="maps" a="#f4f3f1">
      <path d="M0 0h18v32L0 22z" fill="#76d46d" />
      <path d="M36 0h12c2 14 8 22 26 30v30L36 22z" fill="#76d46d" />
      <path d="M48 0c2 14 8 22 26 30V0z" fill="#c9ccd2" />
      <path d="M0 28l18 16v30H0z" fill="#d987c8" />
      <path d="M40 74V52l26 22z" fill="#f6cb45" />
      <path d="M20 0h15v40H20z" fill="#3478f0" />
      <circle cx="28" cy="46" r="19" fill="#fff" />
      <circle cx="28" cy="46" r="16" fill="#3478f0" />
      <path d="M28 34l9 22-9-5-9 5z" fill="#fff" />
    </AppIcon>,
    <AppIcon id="photos" a="#fdfdfd">
      {PETALS.map((c, i) => (
        <rect key={c} x="28" y="5" width="18" height="30" rx="9" fill={c} opacity=".86" transform={`rotate(${i * 45} 37 37)`} style={{ mixBlendMode: "multiply" }} />
      ))}
    </AppIcon>,
    <AppIcon id="facetime" a="#86ee7a" b="#58bf4a">
      <rect x="11" y="21" width="37" height="32" rx="8" fill="#f0faee" />
      <path d="M50 33l10-9c2-1 3-1 3 1v24c0 2-1 2-3 1l-10-9z" fill="#dff3db" />
    </AppIcon>,
    <AppIcon id="calendar" a="#fdfdfd" b="#f2f1ee">
      <path d="M0 0h74v23H0z" fill="#e4604f" />
      <text x="37" y="18" textAnchor="middle" fontFamily="Inter, sans-serif" fontWeight="700" fontSize="15" fill="#fff">
        APR
      </text>
      <text x="37" y="63" textAnchor="middle" fontFamily="Inter, sans-serif" fontWeight="300" fontSize="46" fill="#222">
        3
      </text>
    </AppIcon>,
    <DockIcon viewBox="0 0 74 74">
      <path d="M60 20h17v12H60z" fill="#6db7e4" />
      <path d="M60 32h17v14H60z" fill="#ef9230" />
      <path d="M60 46h16v16H60z" fill="#6fcf5c" />
      <defs>
        <Grad id="contacts" a="#b08f5c" b="#97703f" />
      </defs>
      <rect width="74" height="74" rx="15" fill="url(#contacts)" />
      <path d="M5 6v62" stroke="#8a6637" strokeWidth="2" />
      <circle cx="39" cy="37" r="22.500" fill="none" stroke="#84622f" strokeWidth="2" />
      <circle cx="39" cy="32" r="8" fill="#87663a" />
      <path d="M22 52c6-9 28-9 34 0-8 11-26 11-34 0z" fill="#87663a" />
    </DockIcon>,
    <AppIcon id="reminders" a="#fff" b="#f2f1ee">
      {["#3478f6", "#e5483a", "#f0962e"].map((c, i) => (
        <g key={c}>
          <circle cx="15" cy={18.5 + i * 18.5} r="5.500" fill="#fff" stroke={c} strokeWidth="1.300" />
          <circle cx="15" cy={18.5 + i * 18.5} r="4" fill={c} />
          <path d={`M28 ${18.5 + i * 18.5}h38`} stroke="#b4b4b4" strokeWidth="1.500" />
        </g>
      ))}
    </AppIcon>,
    <AppIcon id="notes" a="#fbfaf8" b="#e4e3dc">
      <path d="M0 0h74v19H0z" fill="#f7cd4a" />
      <path d="M0 19.500h74" stroke="#8d8b80" strokeWidth="1.500" />
      <path d="M0 22.500h74" stroke="#aaa" strokeDasharray="1 2" />
      <path d="M0 37h74M0 55.500h74" stroke="#d3d3d3" strokeWidth="1.500" />
    </AppIcon>,
    <AppIcon id="tv" a="#2b3a38" b="#0d1113">
      <FaApple x="8" y="21" size="26" color="#fff" />
      <text x="34" y="48" textLength="29" fontFamily="Inter, sans-serif" fontWeight="500" fontSize="31" fill="#fff">
        tv
      </text>
    </AppIcon>,
    <AppIcon id="music" a="#ea6478" b="#e33b3f">
      <path d="M27 19c0-2 1-3 3-3.500l22-4c2 0 3 0 3 2V49h-4.500V25L31.500 29v27H27z" fill="#fff" />
      <ellipse cx="23.500" cy="56" rx="8" ry="6" fill="#fff" />
      <ellipse cx="47" cy="50" rx="8" ry="6" fill="#fff" />
    </AppIcon>,
    <AppIcon id="podcasts" a="#b55fe6" b="#7128ae">
      <g fill="none" stroke="#fff" strokeWidth="3.200" strokeLinecap="round">
        <path d="M24 56a26 26 0 1 1 26 0" />
        <path d="M27 46a16 16 0 1 1 20 0" />
      </g>
      <circle cx="37" cy="32" r="6" fill="#fff" />
      <path d="M31 44c0-5 12-5 12 0l-2 17c-1 5-7 5-8 0z" fill="#fff" />
    </AppIcon>,
    <AppIcon id="news" a="#fff">
      <rect x="15" y="15" width="44" height="44" rx="1.500" fill="#e9485b" />
      <path d="M14 27v10l19 23h9zM32 14l28 33V38L40 14z" fill="#fff" />
    </AppIcon>,
    <AppIcon id="keynote" a="#5ac1f8" b="#2f63e8">
      <path d="M18 10h38l3 20c0 2-1 3-3 3H18c-2 0-3-1-3-3z" fill="#f5f5f7" />
      <path d="M21 28h32v2H21z" fill="#8b8b8b" />
      <circle cx="37" cy="19" r="7" fill="#62bb56" />
      <path d="M37 19v-7a7 7 0 0 0-7 7z" fill="#8a4fb8" />
      <path d="M37 12a7 7 0 0 1 7 7h-7z" fill="#e9843a" />
      <path d="M37 33v28" stroke="#e9eef5" strokeWidth="3" />
      <rect x="25" y="60" width="24" height="3.500" rx="1" fill="#e4e4e4" />
    </AppIcon>,
    <AppIcon id="numbers" a="#97f577" b="#55cc3c">
      {[[14, 47], [26, 35], [39, 11], [52, 24]].map(([x, y]) => (
        <rect key={x} x={x} y={y} width="9" height={63 - y} rx="3" fill="#f6fff2" />
      ))}
    </AppIcon>,
    <AppIcon id="pages" a="#f5b84c" b="#ee8b32">
      <path d="M53 16c2-4 8-2 7 2L22 58l-9 5 3-10z" fill="#f8f8f8" />
      <path d="M13 63l3-9M35 35l6 5" stroke="#777" strokeWidth="1.500" />
      <path d="M20 62h42" stroke="#f9dcb4" strokeWidth="2" />
    </AppIcon>,
    <AppIcon id="store" a="#50b2f0" b="#2a5fdb">
      <g stroke="#fff" strokeWidth="5.500" strokeLinecap="round" fill="none">
        <path d="M33 16l24 42M41 16L25 43M20 54l-3 4M13 45h30M54 45h7" />
      </g>
    </AppIcon>,
    <AppIcon id="prefs" a="#d6e0e7" b="#8b8b88">
      <circle cx="37" cy="37" r="33" fill="#222" />
      <circle cx="37" cy="37" r="28.500" fill="none" stroke="#b5b5b5" strokeWidth="4" strokeDasharray="1.500 1.500" />
      <circle cx="37" cy="37" r="24.500" fill="#333" stroke="#8d8d8d" strokeWidth="3" />
      <circle cx="37" cy="37" r="18" fill="#555" stroke="#111" strokeWidth="2" />
      <path d="M37 37h23M37 37L25 17M37 37L25 57" stroke="#9a9a9a" strokeWidth="5" />
      <circle cx="37" cy="37" r="7" fill="#a0a0a0" stroke="#222" strokeWidth="2" />
    </AppIcon>,
  ];
  return icons.map((icon, i) => (
    <DockSlot key={i}>
      {icon}
      {(i === 0 || i === 2) && <DockDot />}
    </DockSlot>
  ));
}

const TableauTile = styled.div`
  display: flex;
  align-items: center;
  justify-content: center;
  width: 79px;
  height: 79px;
  margin-bottom: -3px;
  background: #f6f6f6;
  border: 2px solid #fff;
  box-shadow: 0 2px 2px rgba(0, 0, 0, 0.35);
`;

function DockBar() {
  return (
    <Dock>
      <DockIcons />
      <DockSlot $w={47} $pt={14}>
        <DockSep />
      </DockSlot>
      <DockSlot $w={99} $pt={15}>
        <TableauTile>
          <TableauMark size={73} colors={BLUE} k={0.85} />
        </TableauTile>
        <DockDot />
      </DockSlot>
      <DockSlot $w={100}>
        <AppIcon id="vscode" a="#fff">
          <VSMark />
        </AppIcon>
        <DockDot />
      </DockSlot>
      <DockSlot $w={100}>
        <DockIcon viewBox="0 0 74 74">
          <defs>
            <Grad id="sky" a="#8fb2ee" b="#c3d3f3" />
          </defs>
          <rect width="74" height="74" rx="17" fill="#efefef" />
          <rect x="6" y="6" width="62" height="62" rx="12" fill="url(#sky)" />
          <path d="M6 40h62v16a12 12 0 0 1-12 12H18A12 12 0 0 1 6 56z" fill="#1f3a6b" />
          <path d="M6 50l8-4 8 6 8-5 10 8v13H18A12 12 0 0 1 6 56z" fill="#6b5a4c" />
          <path d="M7 56l7-3 6 4 8-3 6 5v5H16z" fill="#e8edf2" />
          <path d="M42 50h22l9 22c1 4-2 6-5 6H38c-4 0-6-2-5-6z" fill="#c9ced6" stroke="#444" strokeWidth="1.500" />
          <path d="M44 56h17l5 14H40z" fill="#8d97a5" />
          <rect x="38" y="36" width="33" height="15" rx="4" fill="#161616" />
          <ellipse cx="54.500" cy="38" rx="15" ry="3" fill="#3c3c3c" />
        </DockIcon>
        <DockDot />
      </DockSlot>
      <DockSlot $w={50} $pt={14}>
        <DockSep />
      </DockSlot>
      <DockSlot $w={92} $pt={30}>
        <svg width="86" height="66" viewBox="0 0 86 66">
          <rect width="86" height="47" fill="#fbfbfc" stroke="#d8dde6" />
          <path d="M0 1h86" stroke="#cfd6e4" strokeWidth="2" />
          <path d="M3 5h10M3 8h14M3 11h12M3 14h16M3 17h10" stroke="#a9b6cf" />
          <path d="M27 3v44" stroke="#e0e0e6" />
          <path d="M32 10h20M32 14h34M32 17h26M32 20h48M32 25h40M32 28h44" stroke="#b9bfca" />
          <path d="M34 12h12M36 22h14" stroke="#d59a9a" />
          <rect x="56" y="38" width="28" height="28" rx="7" fill="#fff" />
          <g transform="translate(57 39) scale(.35)">
            <VSMark />
          </g>
        </svg>
      </DockSlot>
      <DockSlot $w={110} $pt={10}>
        <svg width="66" height="86" viewBox="0 0 66 86">
          <defs>
            <Grad id="trash" a="#cfcfd1" b="#ececee" h />
          </defs>
          <path d="M6 12l9-7 8 5 8-9 8 9 9-8 7 9 6 4-4 8H8z" fill="#f7f7f7" stroke="#c6c6c6" />
          <path d="M10 12l9 2-6 6zM42 8l7 8 9-3-7 9-9-3z" fill="#4a4745" />
          <path d="M24 12l6-3 6 7-8 4z" fill="#d8d8d8" />
          <path d="M27 14l5 2-3 4z" fill="#3bb26f" />
          <path d="M38 10l6 6-5 5z" fill="#8a6a5c" />
          <path d="M1 16c2 6 62 6 64 0l-8 61c-1 10-47 10-48 0z" fill="url(#trash)" stroke="#fafafa" strokeWidth="1.500" opacity=".95" />
          <path d="M14 28l6 44M46 26l-4 48M30 30l-2 40" stroke="#c2c2c4" strokeWidth="2" opacity=".7" />
          <path d="M11 78c8 6 36 6 44 0" stroke="#fff" strokeWidth="3" fill="none" />
        </svg>
      </DockSlot>
    </Dock>
  );
}

/* ---------- menu bar ---------- */

const MENUS = [
  ["Tableau Public", 186, 700],
  ["File", 42],
  ["Data", 56],
  ["Worksheet", 128],
  ["Dashboard", 130],
  ["Story", 63],
  ["Analysis", 98],
  ["Map", 52],
  ["Format", 85],
  ["Window", 95],
  ["Help", 54],
];

const SiriOrb = styled.i`
  width: 28px;
  height: 28px;
  margin-left: 34px;
  border-radius: 50%;
  background: radial-gradient(circle at 52% 50%, #fff 0 12%, transparent 45%),
    conic-gradient(#43b58a 0 12%, #2f9fb0 30%, #3f78e0 50%, #7356c8 62%, #e0407f 75%, #d8557f 88%, #43b58a);
`;

function TopMenu() {
  return (
    <MenuBar>
      <FaApple size={31} color="#000" style={{ width: 26 }} />
      <MenuItems>
        {MENUS.map(([m, w, weight]) => (
          <Text key={m} w={w + 3} $sys $size={25.5} $weight={weight || 500} $color="#000" $line={34}>
            {m}
          </Text>
        ))}
      </MenuItems>
      <MenuStatus>
        <svg width="50" height="24">
          <rect x="1" y="1" width="43" height="22" rx="7" fill="none" stroke="#7b7b7b" strokeWidth="2" />
          <rect x="4" y="4" width="17" height="16" rx="4" fill="#000" />
          <path d="M47 8c4 1.500 4 6.500 0 8z" fill="#7b7b7b" />
        </svg>
        <Slot $w={32} $ml={38}>
          <svg width="32" height="24" viewBox="0 0 32 24" fill="none" strokeWidth="4">
            <path d="M1.500 9a20.500 20.500 0 0 1 29 0" stroke="#9d9d9d" />
            <path d="M7 14.500a13 13 0 0 1 18 0" stroke="#000" />
            <path d="M16 24l-5-5.500a8 8 0 0 1 10 0z" fill="#000" />
          </svg>
        </Slot>
        <Slot $w={26} $ml={38}>
          <svg width="26" height="26" fill="none" stroke="#000" strokeWidth="3">
            <circle cx="10.500" cy="10.500" r="8.800" />
            <path d="M17 17l7.500 7.500" strokeLinecap="round" />
          </svg>
        </Slot>
        <Slot $w={28} $ml={37}>
          <svg width="28" height="26">
            <rect x="1.300" y="1.300" width="25.400" height="9.400" rx="4.700" fill="none" stroke="#000" strokeWidth="2.500" />
            <circle cx="6.500" cy="6" r="3.600" fill="#000" />
            <rect y="14" width="28" height="12" rx="6" fill="#000" />
            <circle cx="22" cy="20" r="3.600" fill="#e6e6e6" />
          </svg>
        </Slot>
        <SiriOrb />
        <Text w={254} $sys $size={25.5} $weight={500} $color="#000" $ml={32}>
          {"Sun Apr 3  10:47 PM"}
        </Text>
      </MenuStatus>
    </MenuBar>
  );
}

/* ---------- app ---------- */

export default function App() {
  return (
    <Desktop>
      <GlobalStyle />
      <Wallpaper width="2880" height="1800">
        <defs>
          <Grad id="wpb" a="#0b0322" b="#1a0548" h />
          <Grad id="wpp" a="#450f60" b="#17043d" h />
        </defs>
        <rect width="2880" height="1800" fill="url(#wpb)" />
        <path d="M2600 0h280v160z" fill="#250a78" />
        <path d="M1590 1600h830l60 200h-615z" fill="url(#wpp)" />
        <path d="M2880 1560v100l-290 20z" fill="#0e032c" />
      </Wallpaper>
      <BackWindow>
        <BackTitle>
          <GreyLight />
          <GreyLight />
        </BackTitle>
        <BackBand />
        <BackPage>
          <BackGutter />
          <BackArticle>
            <Text w={1484} $sys $size={30} $weight={500} $color="#1b1f22" $line={40}>
              The visualisation confirm the popularity of this service in in New York during the month of August 2019.
            </Text>
          </BackArticle>
        </BackPage>
      </BackWindow>
      <TopMenu />
      <WindowShadow />
      <MainWindow>
        <TitleBar>
          <Light $c="#de3226" />
          <Light $c="#9c6f22" />
          <Light $c="#3a8a24" />
          <WindowTitle>
            <DocIcon>
              <TableauMark size={27} colors={BLUE} k={0.95} />
            </DocIcon>
            <Text w={368} $sys $size={25.5} $weight={700} $color="#3a3a3a">
              Tableau Public - FinalProject
            </Text>
          </WindowTitle>
        </TitleBar>
        <Tools />
        <Body>
          <DataPane>
            <PaneTabs>
              <PaneTab $active>
                <Text w={55} $weight={700} $color="#222">Data</Text>
              </PaneTab>
              <PaneTab>
                <Text w={102}>Analytics</Text>
                <I w={11} h={18} sw={2}>
                  <path d="M10 1L2 9l8 8" />
                </I>
              </PaneTab>
            </PaneTabs>
            <SourceRow>
              <I w={34} h={32} dy={2}>
                <path d="M1 5v15c0 3 2 5 6 5M1 5c0-5 15-5 16 0M2 7c2 2 4 2 6 2" />
                <ellipse cx="19" cy="10" rx="9" ry="4.500" />
                <path d="M10 11v5M28 11v6M6 13v8h8M11 17l4 4-4 4M10 27c1 2 3 3 6 3" />
                <circle cx="24.500" cy="24" r="8" fill="#3b80a3" stroke="none" />
                <path d="M20.500 24l3 3.500 5-7" stroke="#fff" />
              </I>
              <Text w={276} $ml={-1}>201908-citibike-tripdata</Text>
            </SourceRow>
            <SearchRow>
              <SearchBox>
                <Text w={77} $color="#a3a3a3">Search</Text>
                <I w={19} h={18}>
                  <circle cx="11.500" cy="7.500" r="6.500" />
                  <path d="M7 12l-6 6" />
                </I>
              </SearchBox>
              <Slot $w={26} $ml={8}>
                <I w={26} h={24}>
                  <path d="M1 1h24v2L16 12v11h-5V12L1 3z" />
                </I>
              </Slot>
              <Slot $w={2} $h={35} $ml={10} $bg="#d4d4d4" />
              <Slot $w={24} $ml={11}>
                <svg width="24" height="18">
                  {[0, 4, 8, 12, 16].map((y) => (
                    <path key={y} d={`M0 ${y}h4v2H0zM6 ${y}h8v2H6zM16 ${y}h8v2h-8z`} fill="#666" />
                  ))}
                </svg>
              </Slot>
              <Caret $ml={18} $w={14} $h={8} />
            </SearchRow>
            <TablesHead>
              <Text w={73} $weight={700} $color="#000">Tables</Text>
            </TablesHead>
            {DIMENSIONS.map((f) => (
              <Field key={f[1]} data={f} />
            ))}
            <Divider />
            {MEASURES.map((f) => (
              <Field key={f[1]} data={f} />
            ))}
          </DataPane>

          <CardColumn>
            <Card $h={124}>
              <Text w={67}>Pages</Text>
            </Card>
            <Card $h={156}>
              <Text w={68}>Filters</Text>
            </Card>
            <Card $h={482}>
              <Text w={69}>Marks</Text>
              <Select $w={280} $h={42} $bg="#fff" $mt={25}>
                <SelectValue $pl={24}>
                  <I w={20} h={20} dy={-1}>
                    <circle cx="10" cy="10" r="8.500" />
                  </I>
                  <Text w={54} $size={21} $ml={13}>Circle</Text>
                </SelectValue>
                <SelectArrow>
                  <Caret $w={14} $h={8} />
                </SelectArrow>
              </Select>
              <MarkGrid>
                <MarkButton>
                  <MarkIcon>
                    <svg width="26" height="26">
                      <circle cx="6" cy="6" r="5.800" fill="#866e95" />
                      <circle cx="20" cy="6" r="5.800" fill="#f96f7f" />
                      <circle cx="6" cy="20" r="5.800" fill="#f4a57c" />
                      <circle cx="20" cy="20" r="5.800" fill="#84a3cb" />
                    </svg>
                  </MarkIcon>
                  <Text w={51} $size={21} $line={26}>Color</Text>
                </MarkButton>
                <MarkButton>
                  <MarkIcon>
                    <SizeGlyph />
                  </MarkIcon>
                  <Text w={39} $size={21} $line={26}>Size</Text>
                </MarkButton>
                <MarkButton>
                  <MarkIcon>
                    <TagT h={26} />
                  </MarkIcon>
                  <Text w={51} $size={21} $line={26}>Label</Text>
                </MarkButton>
                <MarkButton>
                  <MarkIcon>
                    <I w={32} h={24}>
                      <circle cx="16" cy="5.500" r="4.800" fill="#666" stroke="none" />
                      <circle cx="5" cy="18" r="3.600" />
                      <circle cx="16" cy="18" r="3.600" />
                      <circle cx="27" cy="18" r="3.600" />
                    </I>
                  </MarkIcon>
                  <Text w={53} $size={21} $line={26}>Detail</Text>
                </MarkButton>
                <MarkButton>
                  <MarkIcon>
                    <I w={28} h={27}>
                      <path d="M1 1h26v18h-6v6l-6-6H1z" />
                    </I>
                  </MarkIcon>
                  <Text w={62} $size={21} $line={26}>Tooltip</Text>
                </MarkButton>
              </MarkGrid>
              <PillRow>
                <SizeGlyph />
                <Pill>
                  <Text w={180} $color="#fff">CNT(201908_..</Text>
                </Pill>
              </PillRow>
              <PillRow>
                <TagT />
                <Pill>
                  <Text w={69} $color="#fff">Bikeid</Text>
                </Pill>
              </PillRow>
            </Card>
          </CardColumn>

          <ViewColumn>
            <Shelf>
              <ShelfHead $pl={13} $gap={14}>
                <svg width="22" height="24">
                  {[0, 8, 16].map((x) => (
                    <path key={x} d={`M${x} 0h4v4h-4zM${x} 6h4v18h-4z`} fill="#666" />
                  ))}
                </svg>
                <Text w={99}>Columns</Text>
              </ShelfHead>
            </Shelf>
            <Shelf>
              <ShelfHead $pl={12} $gap={13}>
                <svg width="24" height="20">
                  {[0, 8, 16].map((y) => (
                    <path key={y} d={`M0 ${y}h4v4H0zM6 ${y}h18v4H6z`} fill="#666" />
                  ))}
                </svg>
                <Text w={60}>Rows</Text>
              </ShelfHead>
            </Shelf>
            <Sheet>
              <SheetTitle>
                <Text w={290} $book $size={40} $weight={300} $line={50}>Bike Utilization</Text>
              </SheetTitle>
              <Bubbles />
              <HoverCard>
                <Text w={84} $book $size={26} $weight={300} $color="#666" $line={36}>Bikeid:</Text>
                <Text w={80} $book $size={26} $weight={700} $line={36}>34214</Text>
                <Text w={600} $book $size={26} $weight={300} $color="#666" $line={36}>Count of 201908_cb_NYC_tripdata_updated.csv:</Text>
                <Text w={48} $book $size={26} $weight={700} $line={36}>305</Text>
              </HoverCard>
            </Sheet>
          </ViewColumn>
        </Body>
        <BottomTabs />
        <Status />
      </MainWindow>
      <DockBar />
    </Desktop>
  );
}
